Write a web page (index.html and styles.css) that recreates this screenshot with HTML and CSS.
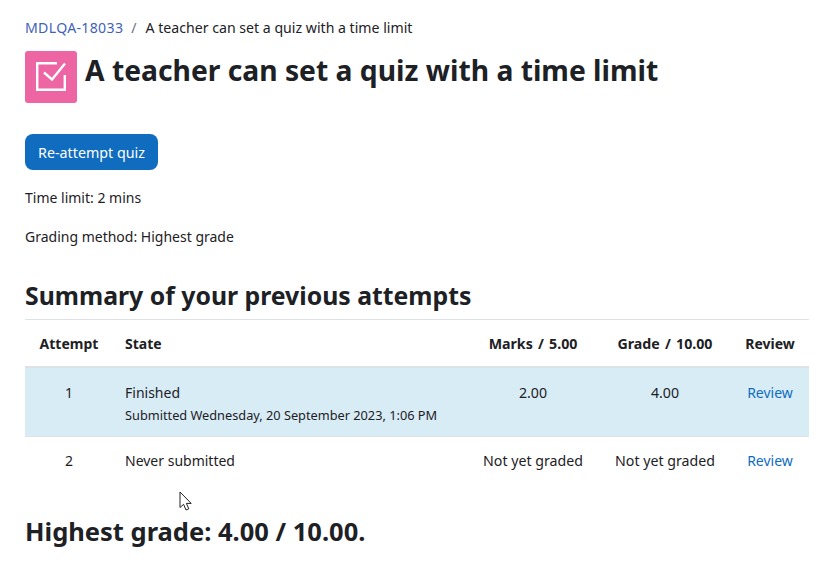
FILE: index.html

```html
<!DOCTYPE html>
<html lang="en">
<head>
  <meta charset="UTF-8">
  <meta name="viewport" content="width=device-width, initial-scale=1.0">
  <title>A teacher can set a quiz with a time limit</title>
  <link rel="stylesheet" href="styles.css">
</head>
<body>
  <div class="page">
    <nav class="breadcrumb">
      <a href="#">MDLQA-18033</a>
      <span class="divider">/</span>
      <span>A teacher can set a quiz with a time limit</span>
    </nav>

    <div class="page-header">
      <div class="activity-icon">
        <svg width="36" height="36" viewBox="0 0 36 36" fill="none" stroke="#fff" stroke-width="2.4">
          <path d="M24 4.2H4.2V30.8H31.8V16"/>
          <path d="M11 13.5L19 20.5L32 4.5"/>
        </svg>
      </div>
      <h1>A teacher can set a quiz with a time limit</h1>
    </div>

    <button class="btn-primary">Re-attempt quiz</button>

    <p class="info first">Time limit: 2 mins</p>
    <p class="info">Grading method: Highest grade</p>

    <h3 class="summary">Summary of your previous attempts</h3>

    <table class="attempts">
      <colgroup>
        <col class="col-attempt">
        <col>
        <col class="col-marks">
        <col class="col-grade">
        <col class="col-review">
      </colgroup>
      <thead>
        <tr>
          <th>Attempt</th>
          <th class="left">State</th>
          <th class="num">Marks / 5.00</th>
          <th class="num">Grade / 10.00</th>
          <th>Review</th>
        </tr>
      </thead>
      <tbody>
        <tr class="best">
          <td>1</td>
          <td class="left">
            Finished
            <div class="submitted">Submitted Wednesday, 20 September 2023, 1:06 PM</div>
          </td>
          <td class="num">2.00</td>
          <td class="num">4.00</td>
          <td><a href="#">Review</a></td>
        </tr>
        <tr>
          <td>2</td>
          <td class="left">Never submitted</td>
          <td class="num">Not yet graded</td>
          <td class="num">Not yet graded</td>
          <td><a href="#">Review</a></td>
        </tr>
      </tbody>
    </table>

    <h3 class="result">Highest grade: 4.00 / 10.00.</h3>

    <svg class="cursor" width="14" height="22" viewBox="0 0 14 22">
      <path d="M1 1V16.5L4.6 13.3L7 19L9.8 17.8L7.4 12.4H12.2Z" fill="#fff" stroke="#222" stroke-width="1"/>
    </svg>
  </div>
</body>
</html>
```

FILE: styles.css

```css
body {
  margin: 0;
  padding: 0;
  font-family: "Noto Sans", "Open Sans", Arial, sans-serif;
  font-size: 14px;
  line-height: 21px;
  color: #1d2125;
  background-color: #fff;
}

a {
  color: #0f6cbf;
  text-decoration: none;
}

.page {
  position: relative;
  padding: 17px 23px 0 25px;
}

.breadcrumb {
  display: flex;
  gap: 8px;
  font-size: 14.13px;
}

.breadcrumb a {
  color: #3f62b8;
  letter-spacing: 0.3px;
}

.breadcrumb .divider {
  color: #6a737b;
  margin-right: 1px;
}

.page-header {
  display: flex;
  align-items: flex-start;
  gap: 8px;
  margin-top: 13px;
}

.activity-icon {
  width: 52px;
  height: 52px;
  display: flex;
  align-items: center;
  justify-content: center;
  flex-shrink: 0;
  border-radius: 3px;
  background-color: #ee65a4;
}

h1 {
  margin: 0;
  font-size: 28.25px;
  line-height: 38px;
  font-weight: 700;
}

.btn-primary {
  display: block;
  width: 133px;
  height: 36px;
  margin-top: 31px;
  padding: 0;
  border: none;
  border-radius: 8px;
  background-color: #0f6cbf;
  color: #fff;
  font-family: inherit;
  font-size: 14.27px;
  cursor: pointer;
}

.info {
  margin: 18px 0 0;
}

.info.first {
  margin-top: 17px;
}

h3 {
  margin: 0;
  line-height: 32px;
  font-weight: 700;
}

.summary {
  margin-top: 32px;
  font-size: 24.8px;
}

.attempts {
  width: 100%;
  margin-top: 8px;
  border-collapse: collapse;
  table-layout: fixed;
  font-size: 14px;
}

.col-attempt {
  width: 88px;
}

.col-marks {
  width: 132px;
}

.col-grade {
  width: 132px;
}

.col-review {
  width: 78px;
}

.attempts th,
.attempts td {
  padding: 13px 0 12px;
  text-align: center;
  vertical-align: top;
}

.attempts .left {
  padding-left: 12px;
  text-align: left;
}

.attempts .num {
  font-size: 14.2px;
}

.attempts th {
  height: 22px;
  padding: 13px 0 11px;
  border-top: 1px solid #dee2e6;
  border-bottom: 2px solid #dee2e6;
  font-weight: 700;
}

.attempts th.num {
  word-spacing: 1.5px;
}

.attempts .best td {
  padding: 14px 0 10px;
  background-color: #d8ecf6;
  border-top: 2px solid #c5e2f0;
  border-bottom: 1px solid #dee2e6;
}

.attempts .best td.left {
  padding-left: 12px;
}

.submitted {
  margin-top: 2px;
  font-size: 12.75px;
}

.result {
  margin-top: 32px;
  font-size: 25.5px;
}

.cursor {
  position: absolute;
  left: 179px;
  top: 491px;
}
```
